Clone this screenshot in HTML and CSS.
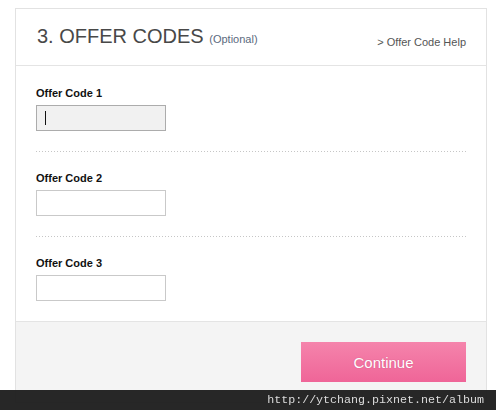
FILE: index.html
```html
<!DOCTYPE html>
<html lang="en">
<head>
    <meta charset="UTF-8">
    <title>Offer Codes</title>
    <link rel="stylesheet" href="styles.css">
</head>
<body>
    <div class="page">
        <div class="panel">
            <div class="panel-head">
                <h2 class="title">3. OFFER CODES <span class="optional">(Optional)</span></h2>
                <a class="help" href="#">&gt; Offer Code Help</a>
            </div>
            <div class="panel-body">
                <div class="field">
                    <label class="label" for="code1">Offer Code 1</label>
                    <input class="code focused" id="code1" type="text">
                </div>
                <div class="field">
                    <label class="label" for="code2">Offer Code 2</label>
                    <input class="code" id="code2" type="text">
                </div>
                <div class="field last">
                    <label class="label" for="code3">Offer Code 3</label>
                    <input class="code" id="code3" type="text">
                </div>
            </div>
            <div class="panel-foot">
                <button class="continue" type="button">Continue</button>
            </div>
        </div>
    </div>
    <div class="watermark">http://ytchang.pixnet.net/album</div>
</body>
</html>
```

FILE: styles.css
```css
body {
    margin: 0;
    background-color: #fff;
    font-family: "Liberation Sans", Arial, sans-serif;
    color: #222;
}
.page {
    padding: 8px 9px 0 15px;
}
.panel {
    border: 1px solid #e2e2e2;
    background-color: #fff;
}
.panel-head {
    display: flex;
    justify-content: space-between;
    align-items: flex-start;
    padding: 15px 20px 16px 21px;
    border-bottom: 1px solid #e4e4e4;
}
.title {
    margin: 0;
    font-size: 20px;
    line-height: 24px;
    font-weight: normal;
    color: #484848;
}
.optional {
    font-size: 11px;
    line-height: 1;
    color: #5b6a7e;
}
.help {
    margin-top: 12px;
    font-size: 11px;
    line-height: 13px;
    color: #555;
    text-decoration: none;
}
.panel-body {
    padding: 0 20px;
}
.field {
    display: flex;
    flex-direction: column;
    align-items: flex-start;
    padding: 20px 0 21px;
    background: linear-gradient(to right, #c6c6c6 1px, transparent 1px) left bottom / 3px 1px repeat-x;
}
.field:first-child {
    padding-top: 21px;
}
.field.last {
    padding-bottom: 20px;
    background: none;
}
.label {
    font-size: 11px;
    line-height: 13px;
    font-weight: bold;
    color: #111;
    margin-bottom: 5px;
}
.code {
    box-sizing: border-box;
    width: 130px;
    height: 26px;
    margin: 0;
    padding: 0 6px;
    border: 1px solid #c9c9c9;
    background-color: #fff;
    font-family: "Liberation Sans", Arial, sans-serif;
    font-size: 12px;
    outline: none;
}
.code.focused {
    border-color: #acacac;
    background: linear-gradient(#111, #111) 8px 5px / 1px 14px no-repeat, #f1f1f1;
}
.panel-foot {
    display: flex;
    justify-content: flex-end;
    padding: 20px;
    border-top: 1px solid #e4e4e4;
    background-color: #f4f4f4;
}
.continue {
    width: 165px;
    height: 40px;
    border: none;
    background: linear-gradient(#f584ac, #ef6598);
    color: #fff;
    font-family: "Liberation Sans", Arial, sans-serif;
    font-size: 15px;
    text-shadow: 0 0 1px rgba(170, 40, 90, 0.5);
    cursor: pointer;
}
.watermark {
    position: fixed;
    left: 0;
    right: 0;
    bottom: 0;
    height: 20px;
    padding-right: 12px;
    background-color: rgba(30, 30, 30, 0.96);
    color: #dcdcdc;
    font-family: "Liberation Mono", "Courier New", monospace;
    font-size: 11.67px;
    line-height: 20px;
    text-align: right;
}
```
